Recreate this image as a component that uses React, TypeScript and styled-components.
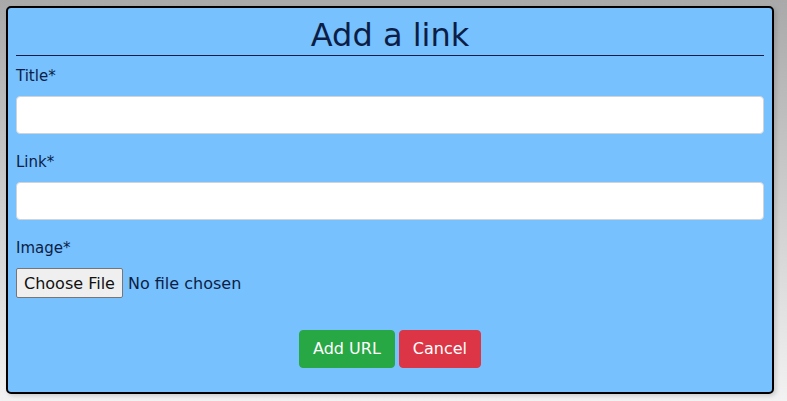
import React from "react";
import styled, { createGlobalStyle } from "styled-components";

const Global = createGlobalStyle`
  html, body { margin: 0; padding: 0; }
  body {
    min-height: 100vh;
    background: linear-gradient(to bottom, #a9a9a9 0%, #f2f2f2 100%);
    font-family: "DejaVu Sans", "Liberation Sans", sans-serif;
  }
  * { box-sizing: border-box; }
`;

const Page = styled.div`
  padding: 6px 13px 6px 6px;
`;

const Modal = styled.form`
  background: #77c1ff;
  border: 2px solid #000;
  border-radius: 5px;
  padding: 8px 8px 24px 8px;
  color: #0c1e45;
  box-shadow: 2px 2px 4px rgba(0, 0, 0, 0.15);
`;

const Heading = styled.h2`
  margin: 0 0 8px 0;
  font-size: 32px;
  font-weight: 400;
  line-height: 39px;
  text-align: center;
  border-bottom: 1px solid #0c1e45;
`;

const Group = styled.div`
  margin-bottom: 16px;
`;

const Label = styled.label`
  display: block;
  font-size: 15px;
  line-height: 24px;
  margin-bottom: 8px;
`;

const TextInput = styled.input`
  display: block;
  width: 100%;
  height: 38px;
  padding: 6px 12px;
  font-size: 16px;
  font-family: inherit;
  background: #fff;
  border: 1px solid #ced4da;
  border-radius: 4px;
  outline: none;
`;

const FileInput = styled.input`
  font-family: inherit;
  font-size: 16px;
  color: #0c1e45;
  height: 30px;
  &::file-selector-button {
    font-family: inherit;
    font-size: 16px;
    color: #111;
    height: 30px;
    padding: 0 7px;
    margin-right: 5px;
    background: #efefef;
    border: 1px solid #767676;
    border-radius: 2px;
  }
`;

const Actions = styled.div`
  display: flex;
  justify-content: center;
  gap: 4px;
  margin-top: 32px;
`;

const Button = styled.button<{ $variant: "success" | "danger" }>`
  font-family: inherit;
  font-size: 16px;
  line-height: 24px;
  padding: 6px 13px;
  border-radius: 4px;
  color: #fff;
  border: 1px solid ${(p) => (p.$variant === "success" ? "#28a745" : "#dc3545")};
  background: ${(p) => (p.$variant === "success" ? "#28a745" : "#dc3545")};
`;

export default function App() {
  return (
    <>
      <Global />
      <Page>
        <Modal onSubmit={(e) => e.preventDefault()}>
          <Heading>Add a link</Heading>
          <Group>
            <Label htmlFor="title">Title*</Label>
            <TextInput id="title" type="text" />
          </Group>
          <Group>
            <Label htmlFor="link">Link*</Label>
            <TextInput id="link" type="text" />
          </Group>
          <div>
            <Label htmlFor="image">Image*</Label>
            <FileInput id="image" type="file" />
          </div>
          <Actions>
            <Button type="submit" $variant="success">Add URL</Button>
            <Button type="button" $variant="danger">Cancel</Button>
          </Actions>
        </Modal>
      </Page>
    </>
  );
}
